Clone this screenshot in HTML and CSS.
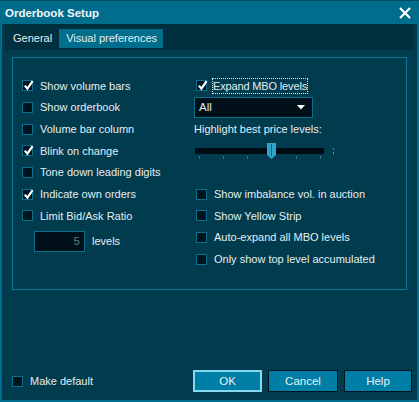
FILE: index.html
```html
<!DOCTYPE html>
<html>
<head>
<meta charset="utf-8">
<link rel="stylesheet" href="styles.css">
</head>
<body>
<div class="dialog">
  <div class="titlebar">
    <span class="title">Orderbook Setup</span>
    <svg class="close" width="12" height="12" viewBox="0 0 12 12"><path d="M1 1 L11 11 M11 1 L1 11" stroke="#fff" stroke-width="2.2" fill="none"/></svg>
  </div>
  <div class="tabbar">
    <div class="tab">General</div>
    <div class="tab active">Visual preferences</div>
  </div>
  <div class="group">
    <div class="col left">
      <div class="row"><span class="cb on"><svg viewBox="0 0 11 11"><path d="M1.8 5.6 L4.4 8.6 L9.6 1.2" stroke="#fff" stroke-width="2.2" fill="none"/></svg></span><span>Show volume bars</span></div>
      <div class="row"><span class="cb"></span><span>Show orderbook</span></div>
      <div class="row"><span class="cb"></span><span>Volume bar column</span></div>
      <div class="row"><span class="cb on"><svg viewBox="0 0 11 11"><path d="M1.8 5.6 L4.4 8.6 L9.6 1.2" stroke="#fff" stroke-width="2.2" fill="none"/></svg></span><span>Blink on change</span></div>
      <div class="row"><span class="cb"></span><span>Tone down leading digits</span></div>
      <div class="row"><span class="cb on"><svg viewBox="0 0 11 11"><path d="M1.8 5.6 L4.4 8.6 L9.6 1.2" stroke="#fff" stroke-width="2.2" fill="none"/></svg></span><span>Indicate own orders</span></div>
      <div class="row"><span class="cb"></span><span>Limit Bid/Ask Ratio</span></div>
      <div class="row levels"><span class="num">5</span><span>levels</span></div>
    </div>
    <div class="col right">
      <div class="row rrow"><span class="cb on"><svg viewBox="0 0 11 11"><path d="M1.8 5.6 L4.4 8.6 L9.6 1.2" stroke="#fff" stroke-width="2.2" fill="none"/></svg></span><span class="focus">Expand MBO levels</span></div>
      <div class="row"><div class="select"><span>All</span><svg width="8" height="5" viewBox="0 0 8 5"><path d="M0 0 L8 0 L4 4.5 Z" fill="#fff"/></svg></div></div>
      <div class="row label">Highlight best price levels:</div>
      <div class="row slider">
        <div class="track"></div>
        <div class="ticks"><i></i><i></i><i></i><i class="hid"></i><i></i><i></i></div>
        <svg class="thumb" width="9" height="16" viewBox="0 0 9 16"><path d="M0 0 H9 V12 L4.5 16 L0 12 Z" fill="#2fa3cc"/><path d="M4.5 1 V13" stroke="#0a5f7e" stroke-width="1"/></svg>
        <span class="endtick"></span>
      </div>
      <div class="row"></div>
      <div class="row rrow"><span class="cb"></span><span>Show imbalance vol. in auction</span></div>
      <div class="row rrow"><span class="cb"></span><span>Show Yellow Strip</span></div>
      <div class="row rrow"><span class="cb"></span><span>Auto-expand all MBO levels</span></div>
      <div class="row rrow"><span class="cb"></span><span>Only show top level accumulated</span></div>
    </div>
  </div>
  <div class="footer">
    <div class="makedef"><span class="cb"></span><span>Make default</span></div>
    <div class="buttons">
      <button class="btn ok">OK</button>
      <button class="btn">Cancel</button>
      <button class="btn">Help</button>
    </div>
  </div>
</div>
</body>
</html>
```
FILE: styles.css
```css
html, body {
  margin: 0;
  padding: 0;
  background: #003b4e;
}
.dialog {
  width: 419px;
  height: 402px;
  box-sizing: border-box;
  border: 2px solid #006d8c;
  border-top: 0;
  background: #003b4e;
  display: flex;
  flex-direction: column;
  font-family: "Liberation Sans", Arial, sans-serif;
  font-size: 11px;
  color: #e4eef2;
}
.titlebar {
  height: 24px;
  box-sizing: border-box;
  border-top: 1px solid #004a62;
  background: #006d8c;
  margin: 0 -2px;
  display: flex;
  align-items: center;
  justify-content: space-between;
  padding: 0 8px 0 5px;
}
.title {
  font-weight: bold;
  font-size: 11.5px;
  color: #f2f6f8;
}
.close {
  display: block;
}
.tabbar {
  height: 26px;
  margin: 0 3px;
  background: #002f3e;
  display: flex;
  align-items: flex-start;
  padding: 5px 0 0 1px;
  box-sizing: border-box;
}
.tab {
  height: 19px;
  line-height: 19px;
  padding: 0 7px;
  font-size: 11px;
}
.tab.active {
  background: #006d8c;
  padding: 0 6px 0 7px;
}
.group {
  margin: 7px 10px 0 10px;
  height: 233px;
  box-sizing: border-box;
  border: 1px solid #0b7696;
  padding: 17px 0 0 9px;
  display: flex;
}
.col {
  display: flex;
  flex-direction: column;
}
.left {
  width: 172px;
}
.row {
  height: 21.67px;
  display: flex;
  align-items: center;
  flex-shrink: 0;
  white-space: nowrap;
}
.rrow {
  padding-left: 2px;
}
.cb {
  width: 11px;
  height: 11px;
  box-sizing: border-box;
  border: 1px solid #0b6f8e;
  background: #001420;
  margin-right: 7px;
  flex-shrink: 0;
  position: relative;
}
.cb svg {
  position: absolute;
  left: 0;
  top: -1px;
  width: 11px;
  height: 11px;
}
.focus {
  outline: 1px dotted #dfe8ec;
  padding: 1px 0;
  margin-left: -1px;
  letter-spacing: -0.15px;
}
.select {
  width: 119px;
  height: 21px;
  box-sizing: border-box;
  border: 1px solid #0b6f8e;
  background: #000f18;
  display: flex;
  align-items: center;
  justify-content: space-between;
  padding: 0 7px 0 4px;
  font-size: 11.5px;
}
.select svg {
  display: block;
  margin-top: 1px;
}
.label {
  font-size: 11px;
}
.slider {
  position: relative;
}
.track {
  position: absolute;
  left: 1px;
  top: 8px;
  width: 129px;
  height: 6px;
  background: #000c12;
}
.ticks {
  position: absolute;
  left: 5px;
  top: 16px;
  display: flex;
  gap: 23.2px;
}
.ticks i {
  display: block;
  width: 1px;
  height: 3px;
  background: #4d6e84;
}
.ticks i.hid {
  visibility: hidden;
}
.thumb {
  position: absolute;
  left: 73px;
  top: 3px;
}
.endtick {
  position: absolute;
  left: 139px;
  top: 8px;
  width: 1px;
  height: 6px;
  background: linear-gradient(#6c7e88 0 40%, #0000 40% 60%, #b08a4a 60%);
}
.levels {
  padding-left: 12px;
  margin-top: 4px;
}
.num {
  width: 51px;
  height: 21px;
  box-sizing: border-box;
  border: 1px solid #0b6f8e;
  background: #000f18;
  color: #5f7c8a;
  text-align: right;
  line-height: 19px;
  padding-right: 4px;
  margin-right: 7px;
  font-size: 11.5px;
}
.footer {
  margin-top: auto;
  display: flex;
  align-items: center;
  justify-content: space-between;
  padding: 0 5px 8px 10px;
}
.makedef {
  display: flex;
  align-items: center;
}
.buttons {
  display: flex;
  gap: 6px;
}
.btn {
  height: 22px;
  width: 70px;
  box-sizing: border-box;
  background: #007fa6;
  border: 1px solid #00141e;
  color: #e6f2f6;
  font-family: "Liberation Sans", Arial, sans-serif;
  font-size: 11.5px;
  padding: 0;
}
.btn.ok {
  width: 69px;
  border: 2px solid #86d8ef;
}
.btn:last-child {
  width: 68px;
}
```
